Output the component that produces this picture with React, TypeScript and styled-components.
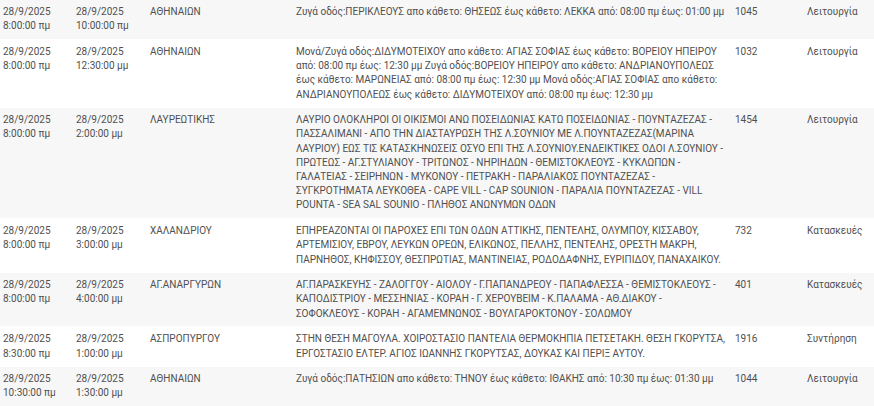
import React from "react";
import styled, { createGlobalStyle } from "styled-components";

const Global = createGlobalStyle`
  html, body { margin: 0; padding: 0; background: #ffffff; }
  body { width: 874px; height: 406px; overflow: hidden; }
`;

const Table = styled.table`
  width: 874px;
  border-collapse: collapse;
  table-layout: fixed;
  font-family: Roboto, "Noto Sans", Arial, sans-serif;
  font-size: 10px;
  color: #505050;
`;

const Row = styled.tr<{ $shaded: boolean }>`
  background: ${(p) => (p.$shaded ? "#f7f7f7" : "#ffffff")};
  border-bottom: 1px solid #ffffff;
`;

const Cell = styled.td`
  padding: 5px 3px 5.5px;
  vertical-align: top;
  line-height: 14.2px;
  word-wrap: break-word;
`;

const DateCell = styled(Cell)`
  width: 67px;
`;

const AreaCell = styled(Cell)`
  width: 140px;
  padding-left: 4px;
`;

const DescCell = styled(Cell)`
  width: 432px;
  white-space: pre-line;
`;

const IdCell = styled(Cell)`
  width: 66px;
  padding-left: 4px;
`;

const KindCell = styled(Cell)``;

type Outage = {
  start: string;
  startTime: string;
  end: string;
  endTime: string;
  area: string;
  desc: string;
  id: string;
  kind: string;
};

const rows: Outage[] = [
  {
    start: "28/9/2025",
    startTime: "8:00:00 πμ",
    end: "28/9/2025",
    endTime: "10:00:00 πμ",
    area: "ΑΘΗΝΑΙΩΝ",
    desc: "Ζυγά οδός:ΠΕΡΙΚΛΕΟΥΣ απο κάθετο: ΘΗΣΕΩΣ έως κάθετο: ΛΕΚΚΑ από: 08:00 πμ έως: 01:00 μμ",
    id: "1045",
    kind: "Λειτουργία",
  },
  {
    start: "28/9/2025",
    startTime: "8:00:00 πμ",
    end: "28/9/2025",
    endTime: "12:30:00 μμ",
    area: "ΑΘΗΝΑΙΩΝ",
    desc: "Μονά/Ζυγά οδός:ΔΙΔΥΜΟΤΕΙΧΟΥ απο κάθετο: ΑΓΙΑΣ ΣΟΦΙΑΣ έως κάθετο: ΒΟΡΕΙΟΥ ΗΠΕΙΡΟΥ από: 08:00 πμ έως: 12:30 μμ Ζυγά οδός:ΒΟΡΕΙΟΥ ΗΠΕΙΡΟΥ απο κάθετο: ΑΝΔΡΙΑΝΟΥΠΟΛΕΩΣ έως κάθετο: ΜΑΡΩΝΕΙΑΣ από: 08:00 πμ έως: 12:30 μμ Μονά οδός:ΑΓΙΑΣ ΣΟΦΙΑΣ απο κάθετο: ΑΝΔΡΙΑΝΟΥΠΟΛΕΩΣ έως κάθετο: ΔΙΔΥΜΟΤΕΙΧΟΥ από: 08:00 πμ έως: 12:30 μμ",
    id: "1032",
    kind: "Λειτουργία",
  },
  {
    start: "28/9/2025",
    startTime: "8:00:00 πμ",
    end: "28/9/2025",
    endTime: "2:00:00 μμ",
    area: "ΛΑΥΡΕΩΤΙΚΗΣ",
    desc: "ΛΑΥΡΙΟ ΟΛΟΚΛΗΡΟΙ ΟΙ ΟΙΚΙΣΜΟΙ ΑΝΩ ΠΟΣΕΙΔΩΝΙΑΣ ΚΑΤΩ ΠΟΣΕΙΔΩΝΙΑΣ - ΠΟΥΝΤΑΖΕΖΑΣ - ΠΑΣΣΑΛΙΜΑΝΙ - ΑΠΟ ΤΗΝ ΔΙΑΣΤΑΥΡΩΣΗ ΤΗΣ Λ.ΣΟΥΝΙΟΥ ΜΕ Λ.ΠΟΥΝΤΑΖΕΖΑΣ(ΜΑΡΙΝΑ ΛΑΥΡΙΟΥ) ΕΩΣ ΤΙΣ ΚΑΤΑΣΚΗΝΩΣΕΙΣ ΟΣΥΟ ΕΠΙ ΤΗΣ Λ.ΣΟΥΝΙΟΥ.ΕΝΔΕΙΚΤΙΚΕΣ ΟΔΟΙ Λ.ΣΟΥΝΙΟΥ - ΠΡΩΤΕΩΣ - ΑΓ.ΣΤΥΛΙΑΝΟΥ - ΤΡΙΤΩΝΟΣ - ΝΗΡΙΗΔΩΝ - ΘΕΜΙΣΤΟΚΛΕΟΥΣ - ΚΥΚΛΩΠΩΝ - ΓΑΛΑΤΕΙΑΣ - ΣΕΙΡΗΝΩΝ - ΜΥΚΟΝΟΥ - ΠΕΤΡΑΚΗ - ΠΑΡΑΛΙΑΚΟΣ ΠΟΥΝΤΑΖΕΖΑΣ - ΣΥΓΚΡΟΤΗΜΑΤΑ ΛΕΥΚΟΘΕΑ - CAPE VILL - CAP SOUNION - ΠΑΡΑΛΙΑ ΠΟΥΝΤΑΖΕΖΑΣ - VILL POUNTA - SEA SAL SOUNIO - ΠΛΗΘΟΣ ΑΝΩΝΥΜΩΝ ΟΔΩΝ",
    id: "1454",
    kind: "Λειτουργία",
  },
  {
    start: "28/9/2025",
    startTime: "8:00:00 πμ",
    end: "28/9/2025",
    endTime: "3:00:00 μμ",
    area: "ΧΑΛΑΝΔΡΙΟΥ",
    desc: "ΕΠΗΡΕΑΖΟΝΤΑΙ ΟΙ ΠΑΡΟΧΕΣ ΕΠΙ ΤΩΝ ΟΔΩΝ ΑΤΤΙΚΗΣ, ΠΕΝΤΕΛΗΣ, ΟΛΥΜΠΟΥ, ΚΙΣΣΑΒΟΥ, ΑΡΤΕΜΙΣΙΟΥ, ΕΒΡΟΥ, ΛΕΥΚΩΝ ΟΡΕΩΝ, ΕΛΙΚΩΝΟΣ, ΠΕΛΛΗΣ, ΠΕΝΤΕΛΗΣ, ΟΡΕΣΤΗ ΜΑΚΡΗ, ΠΑΡΝΗΘΟΣ, ΚΗΦΙΣΣΟΥ, ΘΕΣΠΡΩΤΙΑΣ, ΜΑΝΤΙΝΕΙΑΣ, ΡΟΔΟΔΑΦΝΗΣ, ΕΥΡΙΠΙΔΟΥ, ΠΑΝΑΧΑΙΚΟΥ.",
    id: "732",
    kind: "Κατασκευές",
  },
  {
    start: "28/9/2025",
    startTime: "8:00:00 πμ",
    end: "28/9/2025",
    endTime: "4:00:00 μμ",
    area: "ΑΓ.ΑΝΑΡΓΥΡΩΝ",
    desc: "ΑΓ.ΠΑΡΑΣΚΕΥΗΣ - ΖΑΛΟΓΓΟΥ - ΑΙΟΛΟΥ - Γ.ΠΑΠΑΝΔΡΕΟΥ - ΠΑΠΑΦΛΕΣΣΑ - ΘΕΜΙΣΤΟΚΛΕΟΥΣ - ΚΑΠΟΔΙΣΤΡΙΟΥ - ΜΕΣΣΗΝΙΑΣ - ΚΟΡΑΗ - Γ. ΧΕΡΟΥΒΕΙΜ - Κ.ΠΑΛΑΜΑ - ΑΘ.ΔΙΑΚΟΥ -\nΣΟΦΟΚΛΕΟΥΣ - ΚΟΡΑΗ - ΑΓΑΜΕΜΝΩΝΟΣ - ΒΟΥΛΓΑΡΟΚΤΟΝΟΥ - ΣΟΛΩΜΟΥ",
    id: "401",
    kind: "Κατασκευές",
  },
  {
    start: "28/9/2025",
    startTime: "8:30:00 πμ",
    end: "28/9/2025",
    endTime: "1:00:00 μμ",
    area: "ΑΣΠΡΟΠΥΡΓΟΥ",
    desc: "ΣΤΗΝ ΘΕΣΗ ΜΑΓΟΥΛΑ. ΧΟΙΡΟΣΤΑΣΙΟ ΠΑΝΤΕΛΙΑ ΘΕΡΜΟΚΗΠΙΑ ΠΕΤΣΕΤΑΚΗ. ΘΕΣΗ ΓΚΟΡΥΤΣΑ, ΕΡΓΟΣΤΑΣΙΟ ΕΛΤΕΡ. ΑΓΙΟΣ ΙΩΑΝΝΗΣ ΓΚΟΡΥΤΣΑΣ, ΔΟΥΚΑΣ ΚΑΙ ΠΕΡΙΞ ΑΥΤΟΥ.",
    id: "1916",
    kind: "Συντήρηση",
  },
  {
    start: "28/9/2025",
    startTime: "10:30:00 πμ",
    end: "28/9/2025",
    endTime: "1:30:00 μμ",
    area: "ΑΘΗΝΑΙΩΝ",
    desc: "Ζυγά οδός:ΠΑΤΗΣΙΩΝ απο κάθετο: ΤΗΝΟΥ έως κάθετο: ΙΘΑΚΗΣ από: 10:30 πμ έως: 01:30 μμ",
    id: "1044",
    kind: "Λειτουργία",
  },
];

export default function App() {
  return (
    <>
      <Global />
      <Table>
        <tbody>
          {rows.map((r, i) => (
            <Row key={i} $shaded={i % 2 === 0}>
              <DateCell>
                {r.start}
                <br />
                {r.startTime}
              </DateCell>
              <DateCell>
                {r.end}
                <br />
                {r.endTime}
              </DateCell>
              <AreaCell>{r.area}</AreaCell>
              <DescCell>{r.desc}</DescCell>
              <IdCell>{r.id}</IdCell>
              <KindCell>{r.kind}</KindCell>
            </Row>
          ))}
        </tbody>
      </Table>
    </>
  );
}
